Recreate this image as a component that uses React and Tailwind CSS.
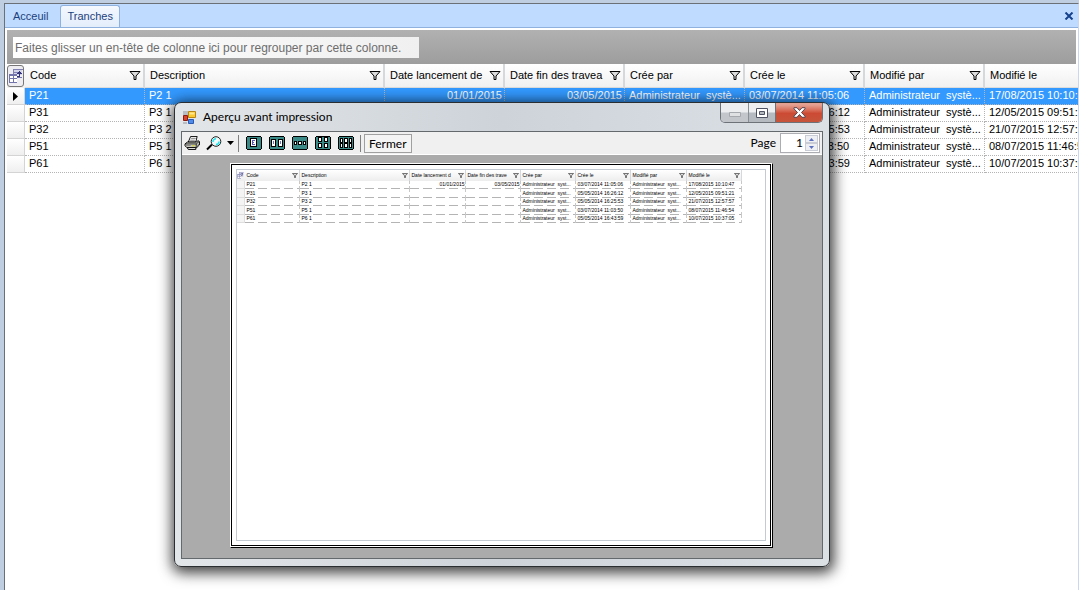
const columns = [
    { key: "code", label: "Code", width: "w-[120px]", small: "w-[55px]" },
    { key: "description", label: "Description", width: "w-[240px]", small: "w-[110px]" },
    { key: "start", label: "Date lancement de", smallLabel: "Date lancement d", width: "w-[120px]", small: "w-[56px]", right: true },
    { key: "end", label: "Date fin des travea", smallLabel: "Date fin des trave", width: "w-[120px]", small: "w-[55px]", right: true },
    { key: "createdBy", label: "Crée par", width: "w-[120px]", small: "w-[55px]" },
    { key: "createdAt", label: "Crée le", width: "w-[120px]", small: "w-[55px]" },
    { key: "updatedBy", label: "Modifié par", width: "w-[120px]", small: "w-[56px]" },
    { key: "updatedAt", label: "Modifié le", width: "w-[120px]", small: "w-[55px]" },
];

const admin = "Administrateur  systè...";

const rows = [
    { code: "P21", description: "P2 1", start: "01/01/2015", end: "03/05/2015", createdBy: admin, createdAt: "03/07/2014 11:05:06", updatedBy: admin, updatedAt: "17/08/2015 10:10:47" },
    { code: "P31", description: "P3 1", start: "", end: "", createdBy: admin, createdAt: "05/05/2014 16:26:12", updatedBy: admin, updatedAt: "12/05/2015 09:51:21" },
    { code: "P32", description: "P3 2", start: "", end: "", createdBy: admin, createdAt: "05/05/2014 16:25:53", updatedBy: admin, updatedAt: "21/07/2015 12:57:57" },
    { code: "P51", description: "P5 1", start: "", end: "", createdBy: admin, createdAt: "03/07/2014 11:03:50", updatedBy: admin, updatedAt: "08/07/2015 11:46:54" },
    { code: "P61", description: "P6 1", start: "", end: "", createdBy: admin, createdAt: "05/05/2014 16:43:59", updatedBy: admin, updatedAt: "10/07/2015 10:37:05" },
];

function FilterIcon({ className }) {
    return (
        <svg className={className} viewBox="0 0 12 9" aria-hidden="true">
            <path d="M1 .5h10L7 5v3.5H5V5z" fill="#dcdcdc" stroke="#000" />
        </svg>
    );
}

function FieldsIcon({ className }) {
    return (
        <svg className={className} viewBox="0 0 14 15" aria-hidden="true">
            <path d="M5 1h8v5H5z" fill="#d5d5ea" />
            <path d="M4 0h10v1H5v4H4zM5 3h4v1H5z" fill="#8080b4" />
            <path d="M1 5h7v9H1z" fill="#fff" />
            <path d="M0 5h8v2H0zM0 9h8v1H0zM0 13h8v1H0zM0 5h1v9H0zM4 7h1v6H4zM8 8h5v1H8z" fill="#7474ac" />
            <path d="M8 4h1V3h1V2h1v1h1v1h1v1h-2v3H8V7h2V5H8z" fill="#34347c" />
        </svg>
    );
}

function FormIcon() {
    return (
        <svg className="h-[13px] w-[13px]" viewBox="0 0 13 13" aria-hidden="true">
            <path d="M0 0h5v4H0zM0 11h4v2H0z" fill="#b9bcc2" />
            <path d="M.5 4.5h4v5h-4z" fill="#d8432c" stroke="#8e1b10" />
            <path d="M5.5.5h7v6h-7z" fill="#fbc930" stroke="#b88613" />
            <path d="M6.500 1.500h5v2h-5z" fill="#ffe793" />
            <path d="M5.500 8.500h5v4h-5z" fill="#4f8be8" stroke="#2b58b0" />
        </svg>
    );
}

function PrinterIcon() {
    return (
        <svg className="h-[14px] w-[17px]" viewBox="0 0 17 15" aria-hidden="true">
            <path d="M6.500.5h7L12 6.500H4z" fill="#fff" stroke="#000" />
            <path d="M7 2.500h5M6 4.500h5" stroke="#777" />
            <path d="M3 6.500h9.500l2-1.500 1.500 1v3.500l-3 3H2.500l-2-2v-2z" fill="#c9c9c0" stroke="#000" />
            <path d="M1 8.500h11.500l3-2.500M12.500 8.500v4" fill="none" stroke="#000" strokeWidth=".8" />
            <path d="M3 12.500h9v2H4z" fill="#fff" stroke="#000" />
            <path d="M8 10.500h3" stroke="#d6d600" />
            <path d="M1.500 10h5M13.500 10.500l2-2" stroke="#777" />
        </svg>
    );
}

function MagnifierIcon() {
    return (
        <svg className="h-[15px] w-[16px]" viewBox="0 0 16 15" aria-hidden="true">
            <path d="M1 13.500l5-5" stroke="#000" strokeWidth="2" />
            <circle cx="10" cy="5.500" r="4.800" fill="#eaf8f8" stroke="#222" />
            <path d="M7 6a3 3 0 013-3.300M13 5.500a3 3 0 01-3 3" fill="none" stroke="#20e8f0" strokeWidth="1.500" />
            <path d="M9.500 5.500l2-2" stroke="#fff" strokeWidth="1.500" />
        </svg>
    );
}

function PagesIcon({ children }) {
    return (
        <svg className="h-[14px] w-[16px]" viewBox="0 0 16 14" shapeRendering="crispEdges" aria-hidden="true">
            <path d="M1 0h14v1h1v12h-1v1H1v-1H0V1h1z" fill="#000" />
            <path d="M1 1h14v12H1z" fill="#3a8a88" />
            {children}
        </svg>
    );
}

const pageViews = [
    {
        label: "Une page",
        icon: (
            <PagesIcon>
                <path d="M4 2h7v9H4z" fill="#000" />
                <path d="M5 3h5v7H5z" fill="#fff" />
                <path d="M6 4h3v1H7v1h1v1H7v1h2v1H6z" fill="#5a5ab4" />
            </PagesIcon>
        ),
    },
    {
        label: "Deux pages",
        icon: (
            <PagesIcon>
                <path d="M2 3h5v8H2zM9 3h5v8H9z" fill="#000" />
                <path d="M3 4h3v6H3zM10 4h3v6h-3z" fill="#fff" />
                <path d="M4 5h1v3H4zM11 5h1v3h-1z" fill="#7070c0" />
            </PagesIcon>
        ),
    },
    {
        label: "Trois pages",
        icon: (
            <PagesIcon>
                <path d="M2 5h12v4H2z" fill="#000" />
                <path d="M3 6h1v2H3zM7 6h2v2H7zM12 6h1v2h-1z" fill="#fff" />
                <path d="M5 5h1v4H5zM10 5h1v4h-1z" fill="#3a8a88" />
            </PagesIcon>
        ),
    },
    {
        label: "Quatre pages",
        icon: (
            <PagesIcon>
                <path d="M3 1h4v5H3zM9 1h4v5H9zM3 7h4v5H3zM9 7h4v5H9z" fill="#000" />
                <path d="M4 2h2v3H4zM10 2h2v3h-2zM4 8h2v3H4zM10 8h2v3h-2z" fill="#fff" />
            </PagesIcon>
        ),
    },
    {
        label: "Six pages",
        icon: (
            <PagesIcon>
                <path d="M2 2h3v5H2zM6 2h4v5H6zM11 2h3v5h-3zM2 7h3v5H2zM6 7h4v5H6zM11 7h3v5h-3z" fill="#000" />
                <path d="M3 3h1v3H3zM7 3h2v3H7zM12 3h1v3h-1zM3 8h1v3H3zM7 8h2v3H7zM12 8h1v3h-1z" fill="#fff" />
            </PagesIcon>
        ),
    },
];

function Tabs() {
    return (
        <div className="flex h-[24px] items-end border-b border-[#8fb1de] bg-[#bfdbff] pr-1 text-[11px] text-[#1c3f7c]">
            <button className="h-[21px] px-2">Acceuil</button>
            <button className="ml-1 h-[22px] rounded-t-[3px] border border-b-0 border-[#8fb1de] bg-linear-to-b from-[#f4f8fe] to-[#e3edfb] px-[6px]">
                Tranches
            </button>
            <button className="mb-[7px] ml-auto" aria-label="Fermer l'onglet">
                <svg className="h-[8px] w-[10px]" viewBox="0 0 10 8" aria-hidden="true">
                    <path d="M1.500.5l7 7M8.500.5l-7 7" stroke="#15428b" strokeWidth="2" />
                </svg>
            </button>
        </div>
    );
}

function Grid() {
    return (
        <div className="overflow-hidden">
            <table className="w-[1098px] table-fixed border-separate border-spacing-0 text-[11px] whitespace-pre">
                <thead>
                    <tr className="h-[24px] bg-linear-to-b from-white to-[#f0f0f0]">
                        <th className="w-[18px] p-0">
                            <button className="flex h-[22px] w-[17px] items-center justify-center rounded-[3px] border border-[#777] bg-[#eeeef2]" aria-label="Choisir les colonnes">
                                <FieldsIcon className="h-[15px] w-[14px]" />
                            </button>
                        </th>
                        {columns.map((col) => (
                            <th key={col.key} className={`${col.width} border-r-2 border-b border-r-[#d5d9dc] border-b-[#dcdcdc] p-0 font-normal`}>
                                <div className="flex items-center justify-between pr-[2px] pl-[5px]">
                                    <span>{col.label}</span>
                                    <FilterIcon className="h-[9px] w-[12px]" />
                                </div>
                            </th>
                        ))}
                    </tr>
                </thead>
                <tbody>
                    {rows.map((row, i) => (
                        <tr key={row.code} className={`h-[17px] leading-[14px] ${i === 0 ? "bg-[#3399ff] text-white" : ""}`}>
                            <td className="border-r border-b border-[#d4d4d4] bg-linear-to-b from-white to-[#efefef] p-0">
                                {i === 0 && (
                                    <svg className="ml-[6px] h-[9px] w-[5px]" viewBox="0 0 5 9" aria-hidden="true">
                                        <path d="M0 0l5 4.500L0 9z" />
                                    </svg>
                                )}
                            </td>
                            {columns.map((col) => (
                                <td key={col.key} className={`overflow-hidden border-r border-b border-dotted border-[#b4b4b4] p-0 pb-[2px] ${col.right ? "pr-[2px] text-right" : "pl-1"}`}>
                                    {row[col.key]}
                                </td>
                            ))}
                        </tr>
                    ))}
                </tbody>
            </table>
        </div>
    );
}

function PrintedGrid() {
    return (
        <table className="w-[505px] table-fixed border-separate border-spacing-0 text-[5px] leading-[7px] whitespace-pre">
            <thead>
                <tr className="h-[11px] bg-linear-to-b from-white to-[#ededed]">
                    <th className="w-[8px] p-0">
                        <FieldsIcon className="h-[7px] w-[7px]" />
                    </th>
                    {columns.map((col) => (
                        <th key={col.key} className={`${col.small} border-r border-[#d5d9dc] p-0 font-normal`}>
                            <div className="flex items-center justify-between pr-px pl-[2px]">
                                <span>{col.smallLabel || col.label}</span>
                                <FilterIcon className="h-[5px] w-[6px] shrink-0" />
                            </div>
                        </th>
                    ))}
                </tr>
            </thead>
            <tbody>
                {rows.map((row) => (
                    <tr key={row.code} className="h-[8px] even:h-[9px]">
                        <td className="border-r border-b border-[#dedede] bg-[#f4f4f4] p-0"></td>
                        {columns.map((col) => (
                            <td
                                key={col.key}
                                className={`overflow-hidden border-r border-dashed border-[#c8c8c8] bg-[repeating-linear-gradient(90deg,#b4b4b4_0_9px,transparent_9px_13px)] bg-[length:100%_1px] bg-bottom bg-no-repeat p-0 pb-px ${col.right ? "text-right" : "pl-[2px]"}`}
                            >
                                {row[col.key].replace("systè", "syst")}
                            </td>
                        ))}
                    </tr>
                ))}
            </tbody>
        </table>
    );
}

function WindowButtons() {
    return (
        <div className="flex h-[20px] overflow-hidden rounded-b-[5px] border border-t-0 border-[#6d7278]">
            <button className="flex w-[28px] items-center justify-center border-r border-[#8a8f95] bg-linear-to-b from-[#eceef0] from-45% to-[#c3c7cc] to-55%" aria-label="Réduire">
                <svg className="mt-1 h-[5px] w-[12px]" viewBox="0 0 12 5" aria-hidden="true">
                    <path d="M.5.5h11v4H.5z" fill="#dfe1e3" stroke="#a5a9ae" />
                </svg>
            </button>
            <button className="flex w-[27px] items-center justify-center border-r border-[#6d7278] bg-linear-to-b from-[#eceef0] from-45% to-[#b5bac0] to-55%" aria-label="Agrandir">
                <svg className="h-[10px] w-[12px]" viewBox="0 0 12 10" aria-hidden="true">
                    <path d="M.5.5h11v9H.5z" fill="#fff" stroke="#4e5263" />
                    <path d="M3.500 3.500h5v3h-5z" fill="#b5bac0" stroke="#4e5263" />
                </svg>
            </button>
            <button className="flex w-[46px] items-center justify-center bg-linear-to-b from-[#e5a091] from-10% via-[#cc4a33] via-55% to-[#c5553c]" aria-label="Fermer la fenêtre">
                <svg className="h-[11px] w-[13px]" viewBox="0 0 13 11" aria-hidden="true">
                    <path d="M1 .7h3l2.500 2.800L9 .7h3v1.100L8.500 5.500 12 9.200v1.100H9L6.500 7.500 4 10.300H1V9.200l3.500-3.700L1 1.800z" fill="#fff" stroke="#564550" />
                </svg>
            </button>
        </div>
    );
}

function PreviewToolbar() {
    return (
        <div className="flex h-[22px] items-center bg-[#f0f0f0] px-[2px] font-['Lato','Open_Sans',sans-serif] text-[12px]">
            <button aria-label="Imprimer"><PrinterIcon /></button>
            <button className="ml-[5px]" aria-label="Zoom"><MagnifierIcon /></button>
            <button className="ml-[5px]" aria-label="Options de zoom">
                <svg className="h-[4px] w-[7px]" viewBox="0 0 7 4" aria-hidden="true"><path d="M0 0h7L3.500 4z" /></svg>
            </button>
            <div className="ml-1 h-[17px] w-px bg-[#808080]" />
            <div className="ml-[7px] flex gap-[7px]">
                {pageViews.map((view) => (
                    <button key={view.label} aria-label={view.label}>{view.icon}</button>
                ))}
            </div>
            <div className="ml-[6px] h-[17px] w-px bg-[#808080]" />
            <button className="ml-[3px] h-[19px] border border-[#a0a0a0] bg-[#f4f4f4] px-1 leading-[17px]">
                Fermer
            </button>
            <label htmlFor="page" className="mr-1 ml-auto leading-[18px]">Page</label>
            <div className="flex h-[20px] w-[40px] items-center border border-[#abadb3] bg-white pr-px">
                <input id="page" type="text" defaultValue="1" className="w-[22px] min-w-0 text-right leading-[18px] outline-none" />
                <div className="ml-auto flex flex-col">
                    <button className="flex h-[8px] w-[13px] items-center justify-center border border-[#c9ccd4] bg-[#eeeff3]" aria-label="Page suivante">
                        <svg className="h-[3px] w-[5px]" viewBox="0 0 5 3" aria-hidden="true"><path d="M0 3h5L2.500 0z" fill="#5a6fc0" /></svg>
                    </button>
                    <button className="flex h-[8px] w-[13px] items-center justify-center border border-[#c9ccd4] bg-[#eeeff3]" aria-label="Page précédente">
                        <svg className="h-[3px] w-[5px]" viewBox="0 0 5 3" aria-hidden="true"><path d="M0 0h5L2.500 3z" fill="#5a6fc0" /></svg>
                    </button>
                </div>
            </div>
        </div>
    );
}

function PreviewWindow() {
    return (
        <div
            role="dialog"
            aria-labelledby="preview-title"
            className="absolute top-[99px] left-[170px] w-[656px] rounded-[7px] border border-[#2b2e31] bg-linear-to-r from-[#e3e6e9] via-[#cdd3d9] to-[#dbe1e5] px-[6px] pb-[7px] shadow-[1px_3px_14px_3px_rgba(0,0,0,0.75)]"
        >
            <div className="flex h-[28px] items-start justify-between">
                <div className="flex items-center gap-[7px] pt-[5px] pl-[2px]">
                    <FormIcon />
                    <h1 id="preview-title" className="font-['Lato','Open_Sans',sans-serif] text-[12px] leading-[18px]">Aperçu avant impression</h1>
                </div>
                <WindowButtons />
            </div>
            <div className="border border-[#64696e]">
                <PreviewToolbar />
                <div className="flex justify-center border-t border-white bg-[#ababab] pt-[8px] pr-[2px] pb-[10px]">
                    <div className="border border-t-white border-r-black border-b-black border-l-white bg-white pr-px pb-px">
                        <div className="border border-black p-1">
                            <div className="h-[372px] w-[530px] border border-[#c3cad2]">
                                <PrintedGrid />
                            </div>
                        </div>
                    </div>
                </div>
            </div>
        </div>
    );
}

export default function App() {
    return (
        <div className="relative flex min-h-screen flex-col overflow-hidden border-t-3 border-l-4 border-[#c0cee2] bg-white font-['Liberation_Sans',Arial,sans-serif] text-black">
            <main className="flex grow flex-col border-t border-r border-l border-t-[#6b6f76] border-r-[#c9d8ee] border-l-[#6b6f76]">
                <Tabs />
                <div className="mt-[2px] ml-[2px] flex flex-col">
                    <div className="mr-[2px] flex h-[34px] items-center bg-linear-to-b from-[#b1b1b1] to-[#9d9d9d] px-[6px]">
                        <div className="h-[21px] bg-linear-to-r from-white to-[#f0f0f0] pr-[18px] pl-[2px] text-[12px] leading-[22px] text-[#6d6d6d]">
                            Faites glisser un en-tête de colonne ici pour regrouper par cette colonne.
                        </div>
                    </div>
                    <Grid />
                </div>
            </main>
            <PreviewWindow />
        </div>
    );
}
